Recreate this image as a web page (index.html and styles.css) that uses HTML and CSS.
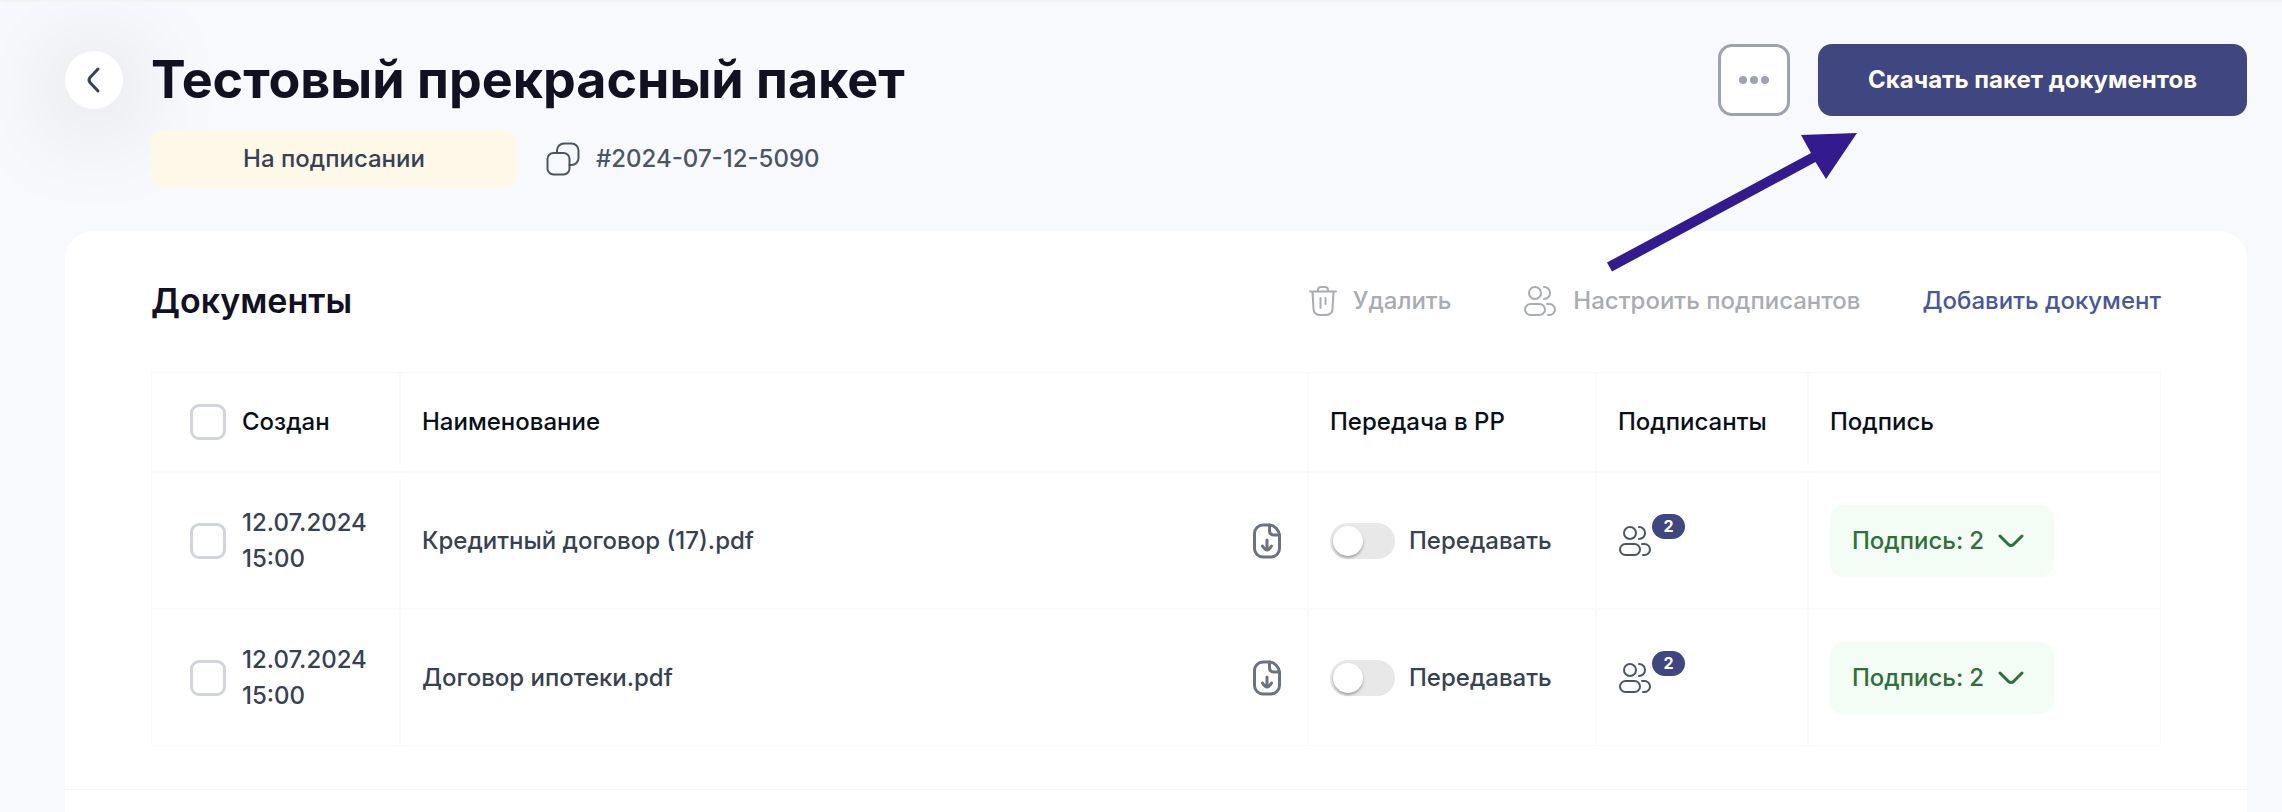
FILE: index.html
```html
<!DOCTYPE html>
<html lang="ru">
  <head>
    <meta charset="UTF-8" />
    <meta name="viewport" content="width=device-width, initial-scale=1.0" />
    <title>Тестовый прекрасный пакет</title>
    <link rel="stylesheet" href="styles.css">
  </head>
  <body>
    <svg class="sprite" aria-hidden="true">
      <symbol id="users" viewBox="0 0 34 32">
        <circle cx="12" cy="8" r="6" />
        <path d="M21 2c3.500 0 6 2.700 6 6s-2.500 6-6 6" />
        <rect x="2" y="19" width="20" height="11" rx="5.500" />
        <path d="M24 19h2.500a5.500 5.500 0 0 1 0 11H25" />
      </symbol>
      <symbol id="download" viewBox="0 0 30 36">
        <path d="M17.500 2H11a8.500 8.500 0 0 0-8.500 8.500v15A8.500 8.500 0 0 0 11 34h8a8.500 8.500 0 0 0 8.500-8.500V12c0-4-5-10-10-10z" />
        <path d="M17.500 2v5.500c0 3 1.500 4.500 4.500 4.500h5.500" />
        <path d="M15 17v10M10.500 23c1.500 2.500 3 4 4.500 4s3-1.500 4.500-4" />
      </symbol>
    </svg>

    <header class="header">
      <button class="back" type="button" aria-label="Назад">
        <svg width="16" height="28" viewBox="0 0 16 28">
          <path d="M12 3L4 11.500q-2 2.500 0 5l8 8.500" />
        </svg>
      </button>
      <div class="heading">
        <h1>Тестовый прекрасный пакет</h1>
        <div class="meta">
          <span class="status">На подписании</span>
          <button class="number" type="button">
            <svg width="34" height="34" viewBox="0 0 34 34">
              <rect x="1.500" y="11" width="22" height="21.500" rx="6" />
              <path d="M11 11V8.500a7 7 0 0 1 7-7h7.500a7 7 0 0 1 7 7V16a7 7 0 0 1-7 7h-2" />
            </svg>
            #2024-07-12-5090
          </button>
        </div>
      </div>
      <div class="header-actions">
        <button class="more" type="button" aria-label="Ещё">
          <svg width="30" height="8" viewBox="0 0 30 8">
            <circle cx="4" cy="4" r="4" />
            <circle cx="15" cy="4" r="4" />
            <circle cx="26" cy="4" r="4" />
          </svg>
        </button>
        <button class="primary" type="button">Скачать пакет документов</button>
        <svg class="arrow" width="250" height="140" viewBox="0 0 250 140">
          <path d="M250 1L194 3l10 18L0 130.500l5 9L208.500 30l10.500 17z" />
        </svg>
      </div>
    </header>

    <main class="card">
      <section class="documents">
        <div class="toolbar">
          <h2>Документы</h2>
          <button class="tool remove" type="button" disabled>
            <svg width="28" height="30" viewBox="0 0 28 30">
              <path d="M1 5.500h26M9 5.500V4a3 3 0 0 1 3-3h4a3 3 0 0 1 3 3v1.500M3.500 5.500L4.500 23a6 6 0 0 0 6 6h7a6 6 0 0 0 6-6l1-17.500M11.500 12v10M16.500 12v6" />
            </svg>
            Удалить
          </button>
          <button class="tool" type="button" disabled>
            <svg width="34" height="32"><use href="#users" /></svg>
            Настроить подписантов
          </button>
          <a class="add" href="#add">Добавить документ</a>
        </div>

        <table>
          <colgroup>
            <col class="col-date" />
            <col />
            <col class="col-transfer" />
            <col class="col-signers" />
            <col class="col-sign" />
          </colgroup>
          <thead>
            <tr>
              <th>
                <label class="check"><input type="checkbox" /> Создан</label>
              </th>
              <th>Наименование</th>
              <th>Передача в РР</th>
              <th>Подписанты</th>
              <th>Подпись</th>
            </tr>
          </thead>
          <tbody>
            <tr>
              <td>
                <label class="check"><input type="checkbox" /> <span>12.07.2024<br />15:00</span></label>
              </td>
              <td>
                <div class="file">
                  Кредитный договор (17).pdf
                  <button type="button" aria-label="Скачать">
                    <svg width="30" height="36"><use href="#download" /></svg>
                  </button>
                </div>
              </td>
              <td>
                <label class="switch"><input type="checkbox" /> Передавать</label>
              </td>
              <td>
                <button class="signers" type="button">
                  <svg width="34" height="32"><use href="#users" /></svg>
                  <span class="count">2</span>
                </button>
              </td>
              <td>
                <button class="sign" type="button">
                  Подпись: <span>2</span>
                  <svg width="26" height="14" viewBox="0 0 26 14">
                    <path d="M2 2l8.500 8.500q2.500 2 5 0L24 2" />
                  </svg>
                </button>
              </td>
            </tr>
            <tr>
              <td>
                <label class="check"><input type="checkbox" /> <span>12.07.2024<br />15:00</span></label>
              </td>
              <td>
                <div class="file">
                  Договор ипотеки.pdf
                  <button type="button" aria-label="Скачать">
                    <svg width="30" height="36"><use href="#download" /></svg>
                  </button>
                </div>
              </td>
              <td>
                <label class="switch"><input type="checkbox" /> Передавать</label>
              </td>
              <td>
                <button class="signers" type="button">
                  <svg width="34" height="32"><use href="#users" /></svg>
                  <span class="count">2</span>
                </button>
              </td>
              <td>
                <button class="sign" type="button">
                  Подпись: <span>2</span>
                  <svg width="26" height="14" viewBox="0 0 26 14">
                    <path d="M2 2l8.500 8.500q2.500 2 5 0L24 2" />
                  </svg>
                </button>
              </td>
            </tr>
          </tbody>
        </table>
      </section>
    </main>
  </body>
</html>
```
FILE: styles.css
```css
* {
  box-sizing: border-box;
  padding: 0;
  margin: 0;
}
body {
  display: flex;
  flex-direction: column;
  min-height: 100vh;
  padding: 0 35px 0 65px;
  border-top: 2px solid #f1f4f0;
  background-color: #f8f9fd;
  color: #374151;
  font-family: Inter, "Noto Sans", sans-serif;
  font-size: 24px;
  font-weight: 500;
  line-height: 36px;
}
button {
  border: none;
  background: none;
  color: inherit;
  font: inherit;
  cursor: pointer;
}
svg {
  display: block;
  flex: none;
  fill: none;
  stroke: currentColor;
  stroke-width: 2;
  stroke-linecap: round;
  stroke-linejoin: round;
}
.sprite {
  position: absolute;
  width: 0;
  height: 0;
}

/* header */
.header {
  display: flex;
  align-items: flex-start;
  padding: 42px 0 43px;
}
.back {
  display: flex;
  align-items: center;
  justify-content: center;
  width: 58px;
  height: 58px;
  margin: 7px 28px 0 0;
  border-radius: 50%;
  background-color: white;
  box-shadow: 0 8px 100px rgba(0, 0, 0, 0.25);
}
.back svg {
  stroke-width: 3;
}
.heading {
  flex: 1;
  position: relative;
}
h1 {
  margin-bottom: 14px;
  color: #111122;
  font-size: 52px;
  font-weight: 700;
  line-height: 72px;
}
.meta {
  display: flex;
  align-items: center;
  gap: 29px;
}
.status {
  width: 366px;
  padding: 11px;
  border-radius: 14px;
  background-color: #fef8e8;
  text-align: center;
}
.number {
  display: flex;
  align-items: center;
  gap: 16px;
  color: #4b5563;
}
.header-actions {
  position: relative;
  display: flex;
  gap: 28px;
}
.more {
  display: flex;
  align-items: center;
  justify-content: center;
  width: 72px;
  height: 72px;
  border: 3px solid #9ca3af;
  border-radius: 14px;
  background-color: white;
}
.more svg,
.arrow {
  fill: #9ca3af;
  stroke: none;
}
.primary {
  height: 72px;
  padding: 0 50px;
  border-radius: 14px;
  background-color: #40467f;
  color: white;
  font-weight: 700;
}
.arrow {
  position: absolute;
  top: 88px;
  right: 390px;
  fill: #331a8f;
  pointer-events: none;
}

/* card */
.card {
  flex: 1;
  border-radius: 28px 28px 0 0;
  background-color: white;
}
.documents {
  padding: 42px 86px 43px;
  border-bottom: 1px solid #f3f4f6;
}
.toolbar {
  display: flex;
  align-items: center;
  margin-bottom: 43px;
}
h2 {
  flex: 1;
  color: #111122;
  font-size: 34px;
  font-weight: 600;
  line-height: 56px;
}
.tool {
  display: flex;
  align-items: center;
  gap: 16px;
  margin-right: 62px;
  color: #a9acb1;
  cursor: default;
}
.remove {
  margin-right: 72px;
}
.add {
  color: #4a559f;
  text-decoration: none;
}

/* table */
table {
  width: 100%;
  border: none;
  border-spacing: 0;
  table-layout: fixed;
}
.col-date {
  width: 249px;
}
.col-transfer {
  width: 288px;
}
.col-signers {
  width: 212px;
}
.col-sign {
  width: 353px;
}
th,
td {
  height: 137px;
  padding: 0 21px;
  border: 1px solid #f9fafb;
  text-align: left;
}
th {
  height: 100px;
  color: #0b0f19;
  font-weight: 500;
}
.check,
.switch {
  display: flex;
  align-items: center;
}
.check {
  gap: 16px;
  padding-left: 17px;
}
.check input {
  flex: none;
  appearance: none;
  width: 36px;
  height: 36px;
  border: 3px solid #d1d5db;
  border-radius: 9px;
  background-color: white;
}
.file {
  display: flex;
  align-items: center;
  justify-content: space-between;
  padding-right: 4px;
}
.file svg {
  color: #6b7280;
  stroke-width: 3;
}
.switch {
  gap: 14px;
}
.switch input {
  appearance: none;
  width: 65px;
  height: 36px;
  padding: 3px;
  border-radius: 18px;
  background-color: #e8e8e8;
}
.switch input::before {
  content: "";
  display: block;
  width: 30px;
  height: 30px;
  border-radius: 50%;
  background-color: white;
  box-shadow: 0 2px 3px rgba(0, 0, 0, 0.3);
}
.signers {
  position: relative;
  display: block;
  color: #4b5563;
}
.count {
  position: absolute;
  top: -11px;
  left: 34px;
  width: 33px;
  border-radius: 13px;
  background-color: #40467f;
  color: white;
  font-size: 16px;
  font-weight: 700;
  line-height: 25px;
  text-align: center;
}
.sign {
  display: flex;
  align-items: center;
  gap: 6px;
  height: 72px;
  padding: 0 30px 0 22px;
  border-radius: 14px;
  background-color: #f3fdf6;
  color: #2f6f3a;
}
.sign svg {
  margin-left: 8px;
  stroke-width: 3;
}
```
